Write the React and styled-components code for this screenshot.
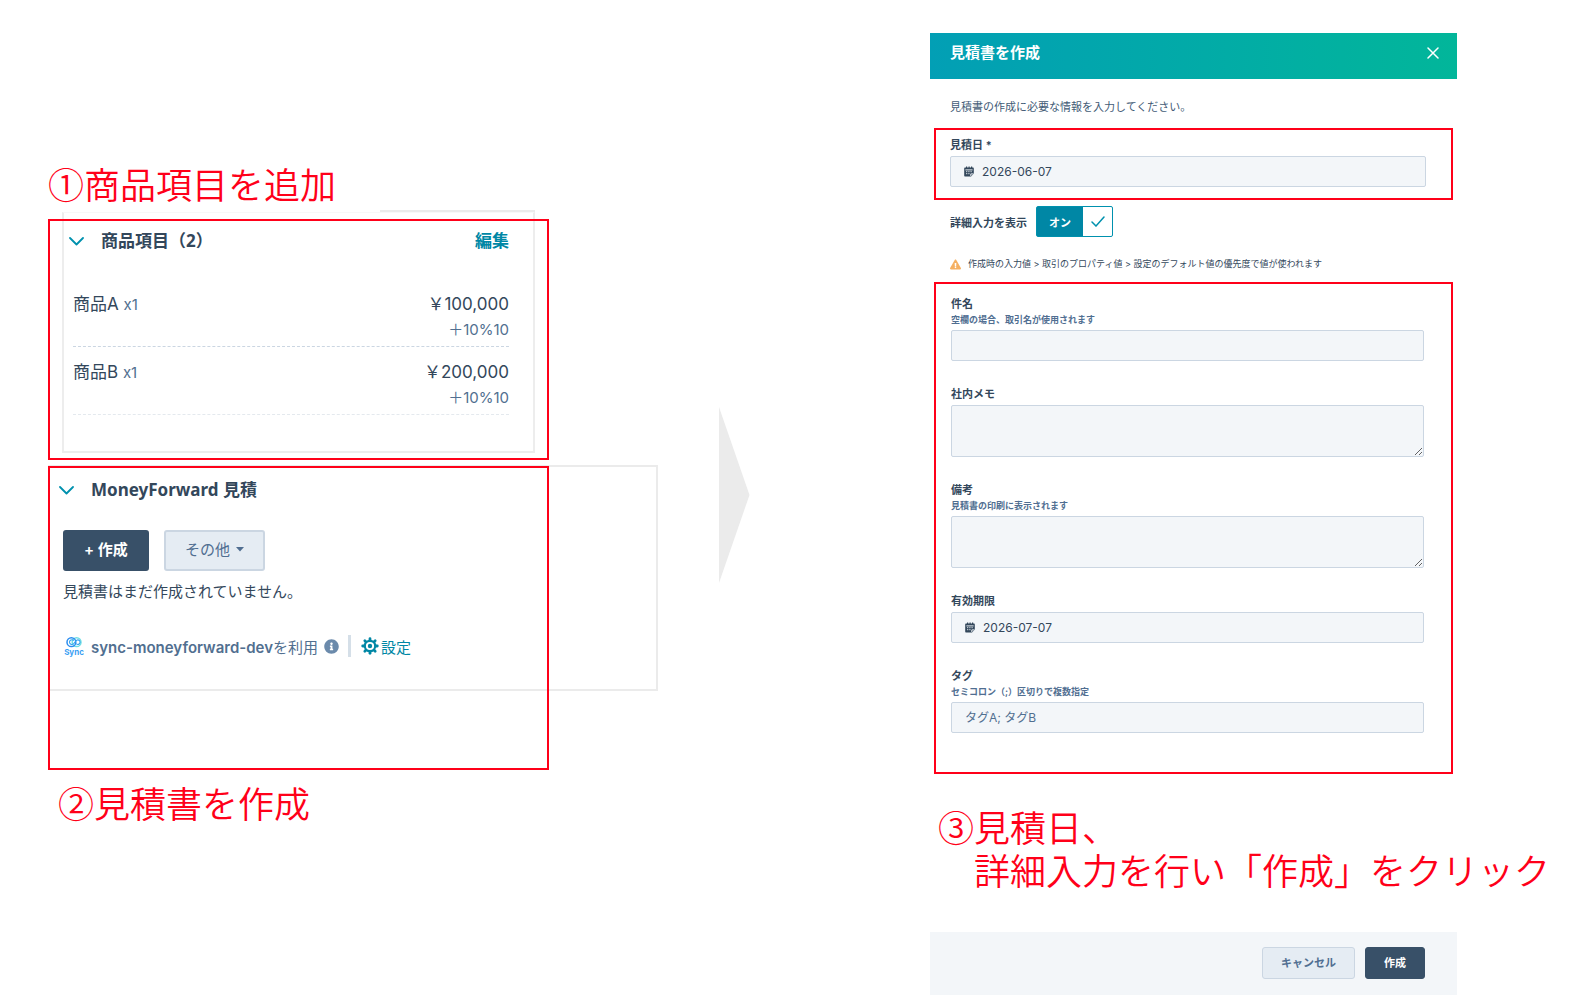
import React, { useState } from "react";
import styled, { createGlobalStyle } from "styled-components";
import { FaInfoCircle, FaExclamationTriangle } from "react-icons/fa";

const GlobalStyle = createGlobalStyle`
  * {
    box-sizing: border-box;
  }
  body {
    margin: 0;
    background: #ffffff;
    color: #33475b;
    font-family: Inter, "Noto Sans CJK JP", sans-serif;
  }
  button, input, textarea {
    font-family: inherit;
  }
`;

const Page = styled.main`
  display: grid;
  grid-template-columns: minmax(0, 610fr) 272px minmax(0, 624fr);
  padding: 0 33px 0 48px;
`;

const LeftColumn = styled.div`
  padding-top: 162px;
`;

const RightColumn = styled.div`
  padding-top: 33px;
`;

const ArrowColumn = styled.div`
  padding: 407px 0 0 61px;
`;

const Caption = styled.h2`
  margin: ${(props) => props.$margin};
  color: #ff0019;
  font-family: "Noto Sans CJK JP", sans-serif;
  font-size: 36px;
  font-weight: 350;
  line-height: 43px;
  white-space: nowrap;
`;

const CaptionLine = styled.span`
  display: block;
  padding-left: ${(props) => (props.$indent ? "1em" : "0")};
`;

/* red frame laid over a part of the screen */
const Marked = styled.div`
  position: relative;
  margin: ${(props) => props.$margin || "0"};
`;

const Frame = styled.div`
  position: absolute;
  inset: ${(props) => props.$inset};
  border: 2px solid #ff0019;
  pointer-events: none;
`;

const ItemsCard = styled.section`
  position: relative;
  padding: 15px 24px 36px 9px;
  border: 2px solid #ededed;
  border-top: 1px solid #f8f8f8;
  &::before {
    content: "";
    position: absolute;
    top: -3px;
    right: -2px;
    width: 155px;
    height: 2px;
    background: #ebebeb;
  }
`;

const QuoteCard = styled.section`
  padding: 10px 13px 31px;
  border: 2px solid #ebebeb;
`;

const CardHeader = styled.header`
  display: flex;
  align-items: center;
  justify-content: space-between;
  margin-bottom: ${(props) => props.$bottom}px;
`;

const Collapse = styled.button`
  display: flex;
  align-items: center;
  gap: 17px;
  margin-left: -4px;
  padding: 0;
  border: 0;
  background: none;
  color: #33475b;
  && {
    font-family: "Noto Sans", "Noto Sans CJK JP", sans-serif;
  }
  font-size: 17px;
  font-weight: 700;
  line-height: 26px;
  cursor: pointer;
`;

const EditLink = styled.a`
  color: #0087a5;
  font-size: 17px;
  font-weight: 700;
  line-height: 26px;
  text-decoration: none;
`;

const ItemList = styled.ul`
  margin: 0;
  padding: 0;
  list-style: none;
`;

const Item = styled.li`
  display: flex;
  justify-content: space-between;
  padding: 12px 0 3px;
  border-bottom: 1px dashed ${(props) => (props.$last ? "#e4e9ee" : "#cbd6e2")};
  font-size: 17px;
  line-height: 26px;
  color: #33475b;
`;

const Price = styled.div`
  text-align: right;
`;

const Small = styled.span`
  display: ${(props) => (props.$block ? "block" : "inline")};
  color: #516f90;
  font-size: 15px;
`;

const ButtonRow = styled.div`
  display: flex;
  justify-content: ${(props) => props.$justify || "flex-start"};
  gap: ${(props) => props.$gap}px;
`;

const Button = styled.button`
  display: flex;
  align-items: center;
  justify-content: center;
  gap: 6px;
  height: ${(props) => (props.$small ? 32 : 41)}px;
  padding: ${(props) => (props.$small ? "0 18px 2px" : "0 19px 5px")};
  border: ${(props) => (props.$small ? 1 : 2)}px solid
    ${(props) => (props.$primary ? "#385068" : "#cbd6e2")};
  border-radius: 3px;
  background: ${(props) => (props.$primary ? "#385068" : "#e5ecf3")};
  color: ${(props) => (props.$primary ? "#ffffff" : "#506e91")};
  font-size: ${(props) => (props.$small ? 11 : 15)}px;
  font-weight: ${(props) => (props.$primary || props.$small ? 600 : 400)};
  white-space: nowrap;
  cursor: pointer;
`;

const EmptyText = styled.p`
  margin: 9px 0 30px;
  font-size: 15px;
  line-height: 24px;
`;

const AppRow = styled.div`
  display: flex;
  align-items: center;
  height: 24px;
  padding-left: 1px;
  color: #516f90;
  font-size: 15px;
  white-space: nowrap;
  svg {
    flex: none;
  }
`;

const AppName = styled.span`
  margin: 0 6px 0 7px;
  strong {
    font-weight: 600;
  }
`;

const Divider = styled.span`
  width: 3px;
  height: 22px;
  margin: 0 10px 0 9px;
  background: #d5dfe8;
`;

const SettingLink = styled.a`
  display: flex;
  align-items: center;
  gap: 2px;
  color: #0087a5;
  text-decoration: none;
`;

const Panel = styled.form`
  margin: 0 97px 0 0;
`;

const PanelHeader = styled.header`
  display: flex;
  align-items: flex-start;
  justify-content: space-between;
  height: 46px;
  padding: 8px 18px 0 20px;
  background: linear-gradient(90deg, #029fb5, #02b69a);
  color: #ffffff;
`;

const PanelTitle = styled.h1`
  margin: 0;
  font-size: 15px;
  font-weight: 600;
  line-height: 24px;
`;

const CloseButton = styled.button`
  display: flex;
  padding: 6px 0;
  border: 0;
  background: none;
  color: #ffffff;
  cursor: pointer;
`;

const Intro = styled.p`
  margin: 0;
  padding: 20px 20px 13px;
  font-size: 11px;
  line-height: 16px;
  color: #425b76;
`;

const Fields = styled.div`
  display: flex;
  flex-direction: column;
  gap: 25px;
  padding: ${(props) => props.$padding};
`;

const FieldBox = styled.div`
  display: flex;
  flex-direction: column;
`;

const Label = styled.label`
  font-size: 11px;
  font-weight: 600;
  line-height: 16px;
`;

const Hint = styled.span`
  color: #506e91;
  font-size: 9px;
  font-weight: 700;
  line-height: 15px;
`;

const Control = styled.div`
  display: flex;
  align-items: center;
  gap: 8px;
  height: 31px;
  margin-top: 3px;
  padding: 0 13px;
  border: 1px solid #cbd6e2;
  border-radius: 2px;
  background: #f3f6f9;
`;

const Input = styled.input`
  flex: 1;
  min-width: 0;
  padding: 0;
  border: 0;
  outline: 0;
  background: none;
  color: #33475b;
  font-size: 12px;
  &::placeholder {
    color: #516f90;
  }
`;

const TextArea = styled.textarea`
  display: block;
  height: 52px;
  margin-top: 3px;
  padding: 8px 13px;
  border: 1px solid #cbd6e2;
  border-radius: 2px;
  outline: 0;
  background: #f3f6f9;
  color: #33475b;
  font-size: 12px;
  resize: vertical;
`;

const ToggleRow = styled.label`
  display: flex;
  align-items: center;
  gap: 9px;
  padding: 6px 0 0 20px;
  font-size: 11px;
  font-weight: 600;
  cursor: pointer;
`;

const HiddenCheckbox = styled.input`
  position: absolute;
  opacity: 0;
`;

const Toggle = styled.span`
  display: flex;
  width: 77px;
  height: 31px;
  border: 1px solid #0091ae;
  border-radius: 2px;
`;

const ToggleText = styled.span`
  display: flex;
  align-items: center;
  justify-content: center;
  width: 46px;
  background: #0087a5;
  color: #ffffff;
`;

const ToggleMark = styled.span`
  display: flex;
  flex: 1;
  align-items: center;
  justify-content: center;
`;

const Notice = styled.p`
  display: flex;
  align-items: center;
  gap: 7px;
  margin: 0;
  padding: 19px 0 10px 20px;
  font-size: 9px;
  line-height: 16px;
  white-space: nowrap;
`;

const PanelFooter = styled.footer`
  padding: 15px 32px 16px;
  background: #f3f6f9;
`;

const items = [
  { name: "商品A", count: "x1", price: "￥100,000", tax: "＋10%10" },
  { name: "商品B", count: "x1", price: "￥200,000", tax: "＋10%10" },
];

const fields = [
  { id: "subject", label: "件名", hint: "空欄の場合、取引名が使用されます" },
  { id: "memo", label: "社内メモ", multiline: true },
  {
    id: "note",
    label: "備考",
    hint: "見積書の印刷に表示されます",
    multiline: true,
  },
  { id: "expire", label: "有効期限", date: "2026-07-07" },
  {
    id: "tags",
    label: "タグ",
    hint: "セミコロン（;）区切りで複数指定",
    placeholder: "タグA; タグB",
  },
];

function Chevron() {
  return (
    <svg width="15" height="9" viewBox="0 0 15 9" fill="none">
      <path
        d="M1 1l6.500 6.500L14 1"
        stroke="#0091ae"
        strokeWidth="1.800"
        strokeLinecap="round"
        strokeLinejoin="round"
      />
    </svg>
  );
}

function CalendarIcon() {
  return (
    <svg width="10" height="11" viewBox="0 0 10 11">
      <path
        d="M1.200 1.500h.8V.4h1.200v1.100h1.300V.4h1.200v1.100H7V.4h1.200v1.100h.6c.6 0 1 .4 1 1v5L7 10.600H1.200c-.6 0-1-.4-1-1V2.500c0-.6.4-1 1-1z"
        fill="#33475b"
      />
      <path
        d="M1.400 3.900h7.200M2.100 5.700h1.200M4.300 5.700h1.200M6.500 5.700h1.200M2.100 7.700h1.200M4.300 7.700h1.200M6.800 10V7.900h2.600"
        stroke="#e8edf2"
        strokeWidth="1"
        fill="none"
      />
    </svg>
  );
}

function GearIcon() {
  return (
    <svg width="18" height="18" viewBox="0 0 18 18">
      <g stroke="#0087a5" strokeWidth="2.800" strokeLinecap="round">
        {[0, 45, 90, 135, 180, 225, 270, 315].map((angle) => (
          <path
            key={angle}
            d="M9 4V1.700"
            transform={`rotate(${angle} 9 9)`}
          />
        ))}
      </g>
      <circle cx="9" cy="9" r="5.200" fill="#fff" stroke="#0087a5" strokeWidth="2.200" />
      <circle cx="9" cy="9" r="2.200" fill="#0087a5" />
    </svg>
  );
}

function SyncLogo() {
  return (
    <svg width="20" height="21" viewBox="0 0 20 21" fill="none">
      <circle cx="12.600" cy="6.200" r="4.400" stroke="#6fdfe4" strokeWidth="1.500" />
      <circle cx="7.400" cy="6.200" r="4.400" stroke="#2b8df0" strokeWidth="1.500" />
      <path
        d="M9.800 4.600a2.400 2.400 0 1 0-.3 3.300l3-3.500a2.200 2.200 0 1 1-.2 3.300"
        stroke="#35a3ee"
        strokeWidth="1.100"
      />
      <text
        x="10"
        y="18.500"
        textAnchor="middle"
        fontSize="8"
        fontWeight="700"
        fill="#3aa0f3"
      >
        Sync
      </text>
    </svg>
  );
}

function Field({ id, label, hint, date, placeholder, multiline }) {
  return (
    <FieldBox>
      <Label htmlFor={id}>{label}</Label>
      {hint && <Hint id={`${id}-hint`}>{hint}</Hint>}
      {multiline ? (
        <TextArea id={id} />
      ) : (
        <Control>
          {date && <CalendarIcon />}
          <Input
            id={id}
            type="text"
            defaultValue={date}
            placeholder={placeholder}
          />
        </Control>
      )}
    </FieldBox>
  );
}

export default function App() {
  const [detail, setDetail] = useState(true);

  return (
    <>
      <GlobalStyle />
      <Page>
        <LeftColumn>
          <Caption $margin="0 0 7px">①商品項目を追加</Caption>
          <Marked $margin="0 123px 12px 14px">
            <ItemsCard>
              <CardHeader $bottom={25}>
                <Collapse type="button">
                  <Chevron />
                  商品項目（2）
                </Collapse>
                <EditLink href="#edit">編集</EditLink>
              </CardHeader>
              <ItemList>
                {items.map((item, index) => (
                  <Item key={item.name} $last={index === items.length - 1}>
                    <div>
                      {item.name} <Small>{item.count}</Small>
                    </div>
                    <Price>
                      {item.price}
                      <Small $block>{item.tax}</Small>
                    </Price>
                  </Item>
                ))}
              </ItemList>
            </ItemsCard>
            <Frame $inset="7px -14px -7px -14px" />
          </Marked>
          <Marked>
            <QuoteCard>
              <CardHeader $bottom={27}>
                <Collapse type="button">
                  <Chevron />
                  MoneyForward 見積
                </Collapse>
              </CardHeader>
              <ButtonRow $gap={15}>
                <Button type="button" $primary>
                  + 作成
                </Button>
                <Button type="button">
                  その他
                  <svg width="8" height="8" viewBox="0 0 8 8">
                    <path d="M0 3h8L4 7.500z" fill="#506e91" />
                  </svg>
                </Button>
              </ButtonRow>
              <EmptyText>見積書はまだ作成されていません。</EmptyText>
              <AppRow>
                <SyncLogo />
                <AppName>
                  <strong>sync-moneyforward-dev</strong>を利用
                </AppName>
                <FaInfoCircle size={15} color="#6b8aab" />
                <Divider />
                <SettingLink href="#settings">
                  <GearIcon />
                  設定
                </SettingLink>
              </AppRow>
            </QuoteCard>
            <Frame $inset="1px 109px -79px 0" />
          </Marked>
          <Caption $margin="90px 0 0 10px">②見積書を作成</Caption>
        </LeftColumn>

        <ArrowColumn>
          <svg width="31" height="176" viewBox="0 0 31 176">
            <path d="M0 0l30.500 88L0 176z" fill="#ebebeb" />
          </svg>
        </ArrowColumn>

        <RightColumn>
          <Panel id="quote">
            <PanelHeader>
              <PanelTitle>見積書を作成</PanelTitle>
              <CloseButton type="button" aria-label="閉じる">
                <svg width="12" height="12" viewBox="0 0 12 12">
                  <path
                    d="M1 1l10 10M11 1L1 11"
                    stroke="currentColor"
                    strokeWidth="1.500"
                    strokeLinecap="round"
                  />
                </svg>
              </CloseButton>
            </PanelHeader>
            <Intro>見積書の作成に必要な情報を入力してください。</Intro>
            <Marked $margin="0 4px">
              <Fields $padding="9px 27px 13px 16px">
                <Field id="date" label="見積日 *" date="2026-06-07" />
              </Fields>
              <Frame $inset="0" />
            </Marked>
            <ToggleRow>
              詳細入力を表示
              <HiddenCheckbox
                type="checkbox"
                checked={detail}
                onChange={() => setDetail(!detail)}
              />
              <Toggle>
                {detail && <ToggleText>オン</ToggleText>}
                <ToggleMark>
                  <svg width="14" height="11" viewBox="0 0 14 11">
                    <path
                      d="M1 6l4 4L13 1"
                      fill="none"
                      stroke="#0091ae"
                      strokeWidth="1.500"
                      strokeLinecap="round"
                    />
                  </svg>
                </ToggleMark>
              </Toggle>
            </ToggleRow>
            <Notice>
              <FaExclamationTriangle size={11} color="#f5b062" />
              作成時の入力値 &gt; 取引のプロパティ値 &gt;
              設定のデフォルト値の優先度で値が使われます
            </Notice>
            <Marked $margin="0 4px">
              <Fields $padding="14px 29px 41px 17px">
                {fields.map((field) => (
                  <Field key={field.id} {...field} />
                ))}
              </Fields>
              <Frame $inset="0" />
            </Marked>
          </Panel>
          <Caption $margin="31px 0 41px 8px">
            <CaptionLine>③見積日、</CaptionLine>
            <CaptionLine $indent>詳細入力を行い「作成」をクリック</CaptionLine>
          </Caption>
          <Panel as="div">
            <PanelFooter>
              <ButtonRow $gap={10} $justify="flex-end">
                <Button type="button" $small>
                  キャンセル
                </Button>
                <Button type="submit" form="quote" $small $primary>
                  作成
                </Button>
              </ButtonRow>
            </PanelFooter>
          </Panel>
        </RightColumn>
      </Page>
    </>
  );
}
